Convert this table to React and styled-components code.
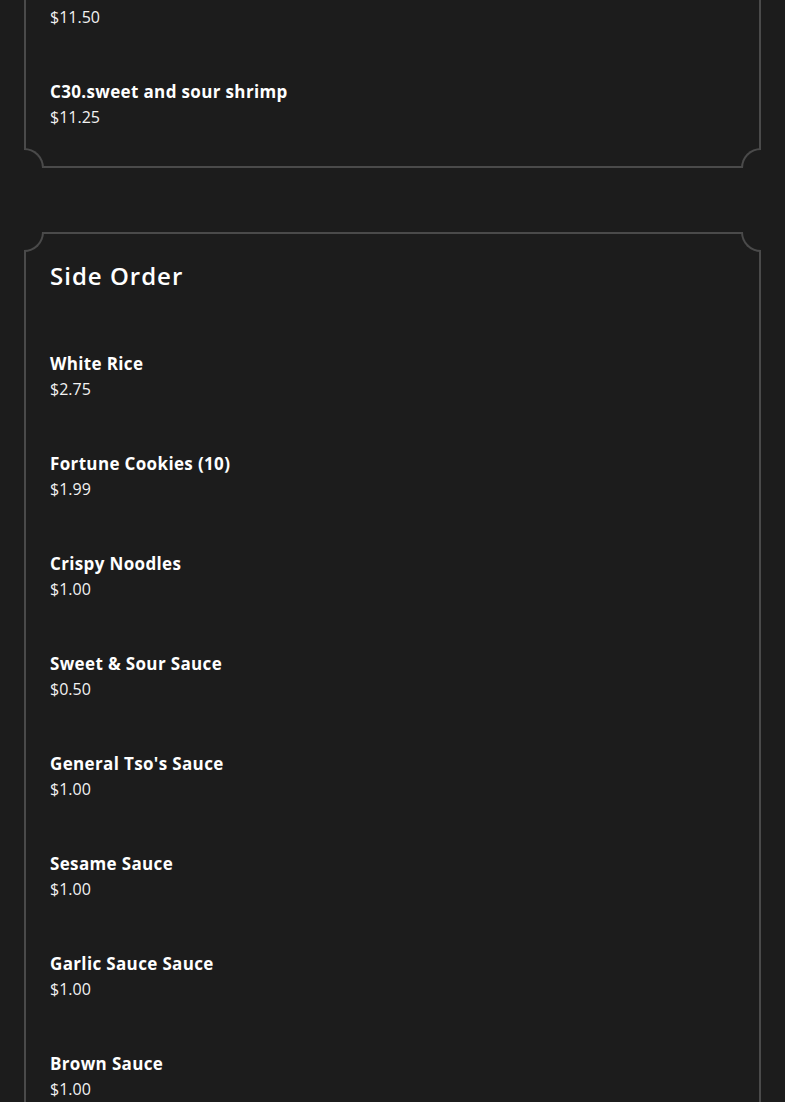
import React from "react";
import styled, { createGlobalStyle, css } from "styled-components";

const BG = "#1c1c1c";
const LINE = "#4a4a4a";

const Global = createGlobalStyle`
  html, body { margin: 0; padding: 0; background: ${BG}; }
  body { font-family: "Open Sans", "DejaVu Sans", sans-serif; color: #fff; }
`;

const Page = styled.main`
  display: flex;
  flex-direction: column;
  gap: 64px;
  padding: 0 24px;
  margin-top: -80px;
`;

const Card = styled.section`
  position: relative;
  border: 2px solid ${LINE};
  padding: ${(p) => (p.$cut ? "32px" : "27px")} 24px 12px 24px;
  background: ${BG};
`;

const cornerStyles = {
  tl: css`top: -2px; left: -2px; border-right: 2px solid ${LINE}; border-bottom: 2px solid ${LINE}; border-bottom-right-radius: 100%;`,
  tr: css`top: -2px; right: -2px; border-left: 2px solid ${LINE}; border-bottom: 2px solid ${LINE}; border-bottom-left-radius: 100%;`,
  bl: css`bottom: -2px; left: -2px; border-right: 2px solid ${LINE}; border-top: 2px solid ${LINE}; border-top-right-radius: 100%;`,
  br: css`bottom: -2px; right: -2px; border-left: 2px solid ${LINE}; border-top: 2px solid ${LINE}; border-top-left-radius: 100%;`,
};

const Corner = styled.span`
  position: absolute;
  width: 20px;
  height: 20px;
  box-sizing: border-box;
  background: ${BG};
  ${(p) => cornerStyles[p.$pos]}
`;

const Title = styled.h2`
  margin: 0 0 36px;
  font-size: 24px;
  line-height: 29px;
  font-weight: 600;
  letter-spacing: 1px;
  color: #fff;
`;

const List = styled.ul`
  list-style: none;
  margin: 0;
  padding: 0;
`;

const Item = styled.li`
  padding: 24px 0;
  display: flex;
  flex-direction: column;
`;

const Name = styled.span`
  font-size: 17px;
  line-height: 26px;
  font-weight: 700;
  letter-spacing: 0.35px;
  color: #fff;
  transform: translateY(1px);
`;

const Price = styled.span`
  font-size: 16px;
  line-height: 26px;
  font-weight: 400;
  color: #f2f2f2;
`;

const Corners = () => (
  <>
    <Corner $pos="tl" />
    <Corner $pos="tr" />
    <Corner $pos="bl" />
    <Corner $pos="br" />
  </>
);

const chicken = [
  { name: "C29.sweet and sour chicken", price: "$11.50" },
  { name: "C30.sweet and sour shrimp", price: "$11.25" },
];

const sides = [
  { name: "White Rice", price: "$2.75" },
  { name: "Fortune Cookies (10)", price: "$1.99" },
  { name: "Crispy Noodles", price: "$1.00" },
  { name: "Sweet & Sour Sauce", price: "$0.50" },
  { name: "General Tso's Sauce", price: "$1.00" },
  { name: "Sesame Sauce", price: "$1.00" },
  { name: "Garlic Sauce Sauce", price: "$1.00" },
  { name: "Brown Sauce", price: "$1.00" },
  { name: "Hot Mustard", price: "$1.00" },
];

const MenuList = ({ items }) => (
  <List>
    {items.map((it) => (
      <Item key={it.name}>
        <Name>{it.name}</Name>
        <Price>{it.price}</Price>
      </Item>
    ))}
  </List>
);

export default function App() {
  return (
    <>
      <Global />
      <Page>
        <Card $cut>
          <Corners />
          <MenuList items={chicken} />
        </Card>
        <Card>
          <Corners />
          <Title>Side Order</Title>
          <MenuList items={sides} />
        </Card>
      </Page>
    </>
  );
}
